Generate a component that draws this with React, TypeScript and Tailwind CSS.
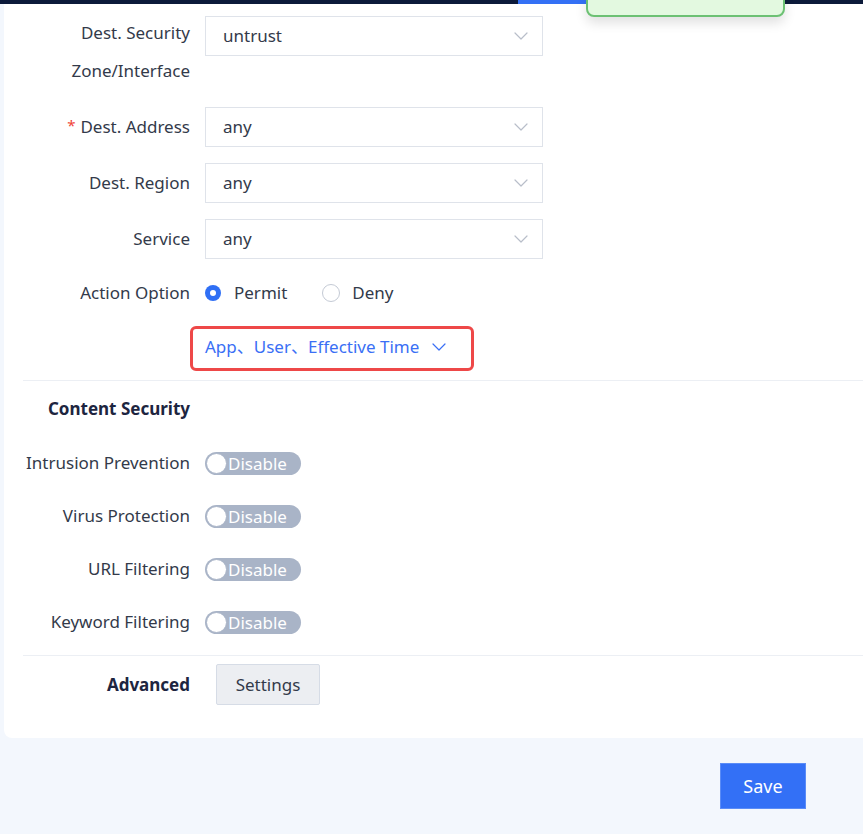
import React from "react";

const Chevron = ({ className = "" }: { className?: string }) => (
  <svg width="14" height="8" viewBox="0 0 14 8" fill="none" className={className}>
    <path d="M1 1l6 6 6-6" stroke="currentColor" strokeWidth="1.2" strokeLinecap="round" strokeLinejoin="round" />
  </svg>
);

const Select = ({ value }: { value: string }) => (
  <div className="w-[338px] h-[40px] border border-[#dfe3ea] bg-white flex items-center justify-between pl-[17px] pr-[14px] text-[17px] text-[#333a4a]">
    <span>{value}</span>
    <Chevron className="text-[#b8bec9]" />
  </div>
);

const Toggle = () => (
  <div className="w-[96px] h-[23px] rounded-full bg-[#a9b4c7] flex items-center pl-[1px]">
    <div className="w-[21px] h-[21px] rounded-full bg-white border border-[#a9b4c7]" />
    <span className="ml-[1px] text-white text-[17px] leading-none">Disable</span>
  </div>
);

const Label = ({ children, bold = false }: { children: React.ReactNode; bold?: boolean }) => (
  <div className={`w-[186px] text-right text-[17px] ${bold ? "font-bold text-[#1d2540]" : "text-[#333a4a]"}`}>{children}</div>
);

export default function App() {
  return (
    <div
      className="w-[863px] h-[834px] bg-[#f3f7fd] relative overflow-hidden"
      style={{ fontFamily: '"Noto Sans", "Noto Sans CJK SC", sans-serif' }}
    >
      {/* top bar */}
      <div className="h-[4px] bg-[#0c1a3a] relative">
        <div className="absolute left-[518px] top-0 w-[68px] h-[4px] bg-[#3370f5]" />
      </div>

      {/* card */}
      <div className="ml-[4px] h-[734px] bg-white rounded-bl-lg pt-[12px]">
        {/* Dest security zone */}
        <div className="flex items-start gap-[15px]">
          <Label>
            <div className="leading-[38px] -mt-[2px]">
              Dest. Security
              <br />
              Zone/Interface
            </div>
          </Label>
          <Select value="untrust" />
        </div>

        <div className="flex items-center gap-[15px] mt-[17px]">
          <Label>
            <span className="text-[#f04438] text-[15px] mr-[5px] relative -top-[2px]">*</span>Dest. Address
          </Label>
          <Select value="any" />
        </div>

        <div className="flex items-center gap-[15px] mt-[16px]">
          <Label>Dest. Region</Label>
          <Select value="any" />
        </div>

        <div className="flex items-center gap-[15px] mt-[16px]">
          <Label>Service</Label>
          <Select value="any" />
        </div>

        <div className="flex items-center gap-[15px] mt-[14px] h-[40px]">
          <Label>Action Option</Label>
          <div className="flex items-center text-[17px] text-[#333a4a]">
            <div className="w-[16px] h-[16px] rounded-full bg-[#2f6ff5] flex items-center justify-center">
              <div className="w-[6px] h-[6px] rounded-full bg-white" />
            </div>
            <span className="ml-[13px]">Permit</span>
            <div className="ml-[35px] w-[18px] h-[18px] rounded-full border border-[#c4cad5] bg-white" />
            <span className="ml-[12px]">Deny</span>
          </div>
        </div>

        <div className="ml-[186px] mt-[13px] w-[284px] h-[45px] border-[3px] border-[#ee4848] rounded-md flex items-center pl-[12px] pb-[3px] text-[#3a6ff5] text-[17px]">
          <span>App、User、Effective Time</span>
          <Chevron className="ml-[13px] text-[#3a6ff5]" />
        </div>

        <div className="ml-[19px] mt-[9px] border-t border-[#eceff4]" />

        <div className="flex items-center gap-[15px] h-[40px] mt-[8px]">
          <Label bold>Content Security</Label>
        </div>

        <div className="flex items-center gap-[15px] h-[40px] mt-[14px]">
          <Label>Intrusion Prevention</Label>
          <Toggle />
        </div>
        <div className="flex items-center gap-[15px] h-[40px] mt-[13px]">
          <Label>Virus Protection</Label>
          <Toggle />
        </div>
        <div className="flex items-center gap-[15px] h-[40px] mt-[13px]">
          <Label>URL Filtering</Label>
          <Toggle />
        </div>
        <div className="flex items-center gap-[15px] h-[40px] mt-[13px]">
          <Label>Keyword Filtering</Label>
          <Toggle />
        </div>

        <div className="ml-[19px] mt-[13px] border-t border-[#eceff4]" />

        <div className="flex items-center gap-[26px] mt-[8px]">
          <Label bold>Advanced</Label>
          <div className="w-[104px] h-[41px] bg-[#eceef2] border border-[#d6dce6] rounded-[2px] flex items-center justify-center text-[17px] text-[#333a4a]">
            Settings
          </div>
        </div>
      </div>

      {/* Save */}
      <div className="absolute left-[720px] top-[763px] w-[86px] h-[46px] bg-[#3370f6] border border-[#5a8cf7] flex items-center justify-center text-white text-[18px]">
        Save
      </div>

      {/* toast */}
      <div className="absolute left-[586px] -top-[4px] w-[199px] h-[21px] bg-[#e3f9e0] border-2 border-[#6cc173] rounded-b-lg shadow-[0_6px_12px_rgba(0,0,0,0.12)]" />
    </div>
  );
}
